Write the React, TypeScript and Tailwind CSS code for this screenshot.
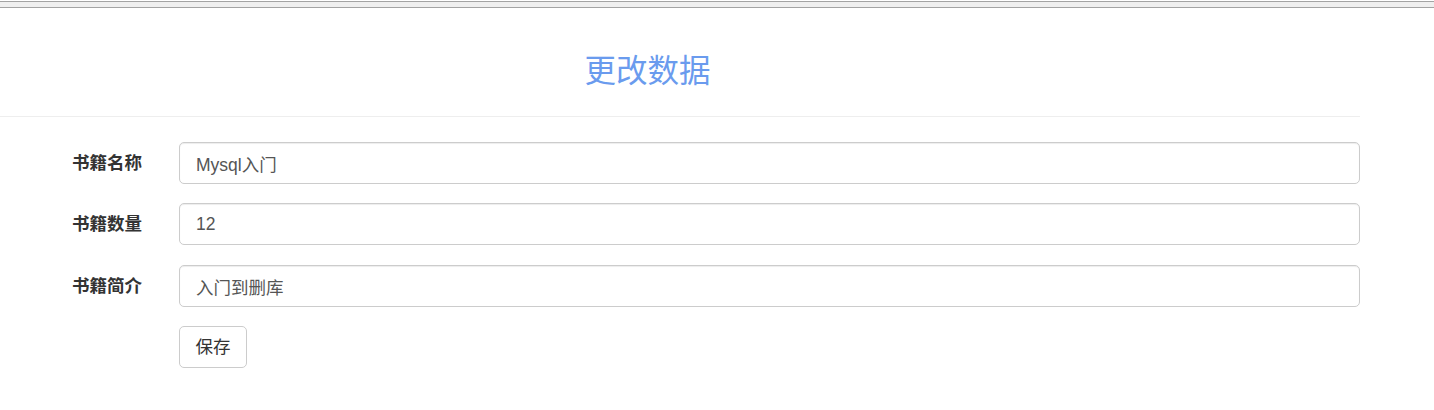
const font = { fontFamily: '"Liberation Sans", "Noto Sans CJK SC", sans-serif' }

const fields = [
  { label: '书籍名称', value: 'Mysql入门', mt: 'mt-0' },
  { label: '书籍数量', value: '12', mt: 'mt-[19px]' },
  { label: '书籍简介', value: '入门到删库', mt: 'mt-[20px]' },
]

export default function App() {
  return (
    <div className="w-[1434px] h-[410px] bg-white text-[#333]" style={font}>
      {/* browser chrome strip */}
      <div className="h-px bg-white" />
      <div className="h-[7px] border-y border-[#a3a3a3] bg-[#efefef]" />

      <div className="w-[1295px] mt-[46px] text-center">
        <h2 className="text-[31.5px] leading-[34px] text-[#6a9bee] font-normal">更改数据</h2>
      </div>

      <div className="w-[1360px] mt-[28px] border-t border-[#eeeeee]" />

      <form className="w-[1360px] mt-[25px]">
        {fields.map((f) => (
          <div key={f.label} className={`flex items-center ${f.mt}`}>
            <label className="w-[142px] text-right text-[17.5px] font-bold text-[#333]">{f.label}</label>
            <div className="ml-[37px] flex-1">
              <input
                readOnly
                value={f.value}
                className="w-full h-[42px] px-[16px] rounded-[5px] border border-[#cccccc] text-[17.5px] text-[#555] shadow-[inset_0_1px_1px_rgba(0,0,0,0.075)] outline-none"
                style={font}
              />
            </div>
          </div>
        ))}
        <div className="mt-[19px] ml-[179px]">
          <button
            type="button"
            className="h-[42px] w-[68px] rounded-[5px] border border-[#cccccc] bg-white text-[17.5px] text-[#333]"
            style={font}
          >
            保存
          </button>
        </div>
      </form>
    </div>
  )
}
